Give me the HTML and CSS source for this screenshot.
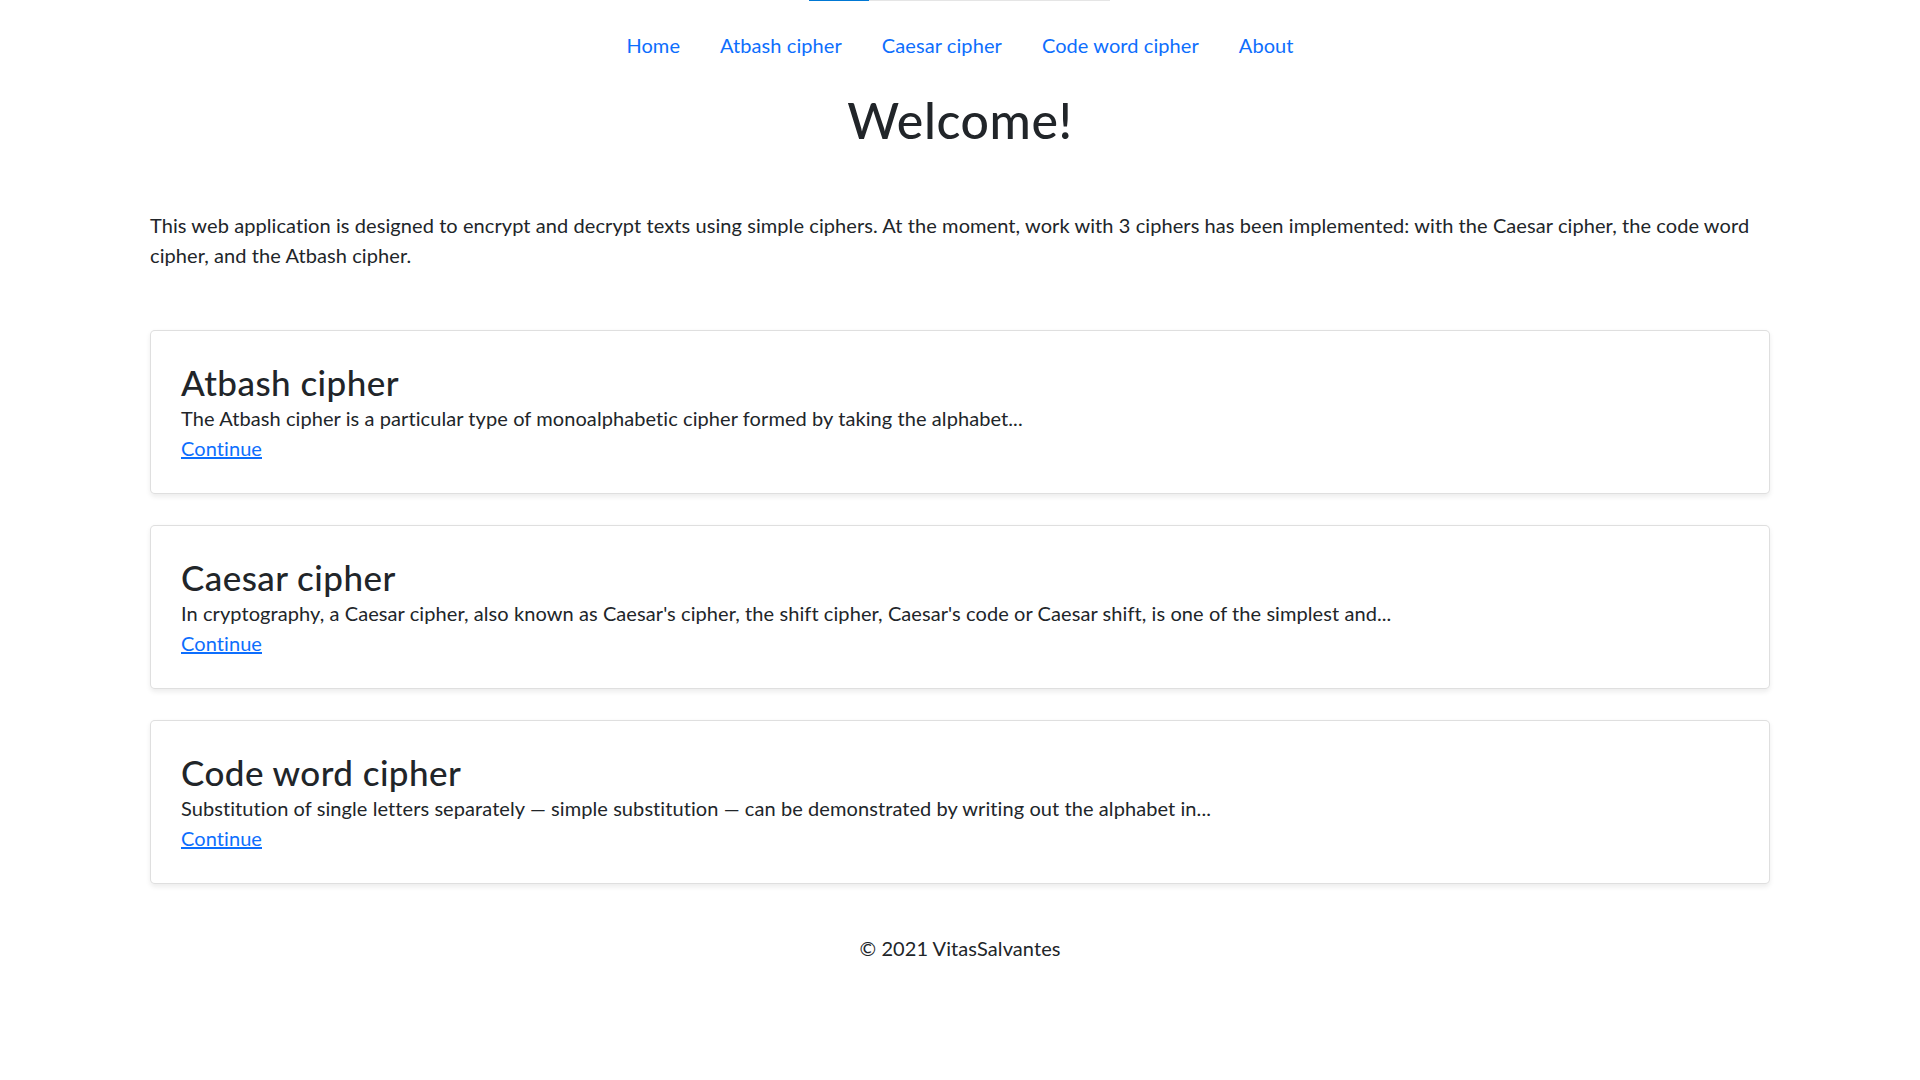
FILE: index.html
```html
<!DOCTYPE html>
<html lang="en">
<head>
<meta charset="utf-8">
<title>Ciphers</title>
<link rel="stylesheet" href="styles.css">
</head>
<body>
<div class="loadbar"><div class="loadbar-fill"></div></div>
<header class="site-header">
  <nav>
    <ul class="nav">
      <li><a class="nav-link" href="#">Home</a></li>
      <li><a class="nav-link" href="#">Atbash cipher</a></li>
      <li><a class="nav-link" href="#">Caesar cipher</a></li>
      <li><a class="nav-link" href="#">Code word cipher</a></li>
      <li><a class="nav-link" href="#">About</a></li>
    </ul>
  </nav>
</header>
<main class="container">
  <h1 class="title">Welcome!</h1>
  <p class="intro">This web application is designed to encrypt and decrypt texts using simple ciphers. At the moment, work with 3 ciphers has been implemented: with the Caesar cipher, the code word cipher, and the Atbash cipher.</p>

  <div class="card">
    <h3 class="card-title">Atbash cipher</h3>
    <p class="card-text">The Atbash cipher is a particular type of monoalphabetic cipher formed by taking the alphabet...</p>
    <a class="card-link" href="#">Continue</a>
  </div>

  <div class="card">
    <h3 class="card-title">Caesar cipher</h3>
    <p class="card-text">In cryptography, a Caesar cipher, also known as Caesar's cipher, the shift cipher, Caesar's code or Caesar shift, is one of the simplest and...</p>
    <a class="card-link" href="#">Continue</a>
  </div>

  <div class="card">
    <h3 class="card-title">Code word cipher</h3>
    <p class="card-text">Substitution of single letters separately — simple substitution — can be demonstrated by writing out the alphabet in...</p>
    <a class="card-link" href="#">Continue</a>
  </div>
</main>
<footer class="site-footer">© 2021 VitasSalvantes</footer>
</body>
</html>
```
FILE: styles.css
```css
* { box-sizing: border-box; }

html, body {
  margin: 0;
  padding: 0;
  background: #fff;
}

body {
  font-family: "Lato", "Open Sans", "Liberation Sans", sans-serif;
  font-size: 20px;
  line-height: 30px;
  color: #212529;
  letter-spacing: 0.08px;
}

.loadbar {
  position: absolute;
  top: 0;
  left: 809px;
  width: 301px;
  height: 1px;
  background: #e5e5e5;
}

.loadbar-fill {
  width: 60px;
  height: 100%;
  background: #0078d4;
}

.site-header {
  padding-top: 20px;
}

.nav {
  display: flex;
  justify-content: center;
  list-style: none;
  margin: 0;
  padding: 0;
}

.nav-link {
  display: block;
  padding: 10px 20px;
  color: #0d6efd;
  text-decoration: none;
}

.container {
  width: 1650px;
  margin: 0 auto;
  padding: 0 15px;
}

.title {
  margin: 20px 0 0;
  font-size: 50px;
  line-height: 60px;
  font-weight: 500;
  text-align: center;
  letter-spacing: 0.6px;
}

.intro {
  margin: 60px 0 60px;
}

.card {
  border: 1px solid rgba(0, 0, 0, 0.125);
  border-radius: 5px;
  box-shadow: 0 2.5px 5px rgba(0, 0, 0, 0.075);
  padding: 30px;
  margin-bottom: 31px;
  background: #fff;
}

.card:last-child {
  margin-bottom: 0;
}

.card-title {
  margin: 0;
  font-size: 35px;
  line-height: 42px;
  font-weight: 500;
  letter-spacing: 0.45px;
}

.card-text {
  margin: 0;
}

.card-link {
  color: #0d6efd;
  text-decoration: underline;
}

.site-footer {
  margin-top: 49px;
  text-align: center;
  padding-bottom: 40px;
}
```
